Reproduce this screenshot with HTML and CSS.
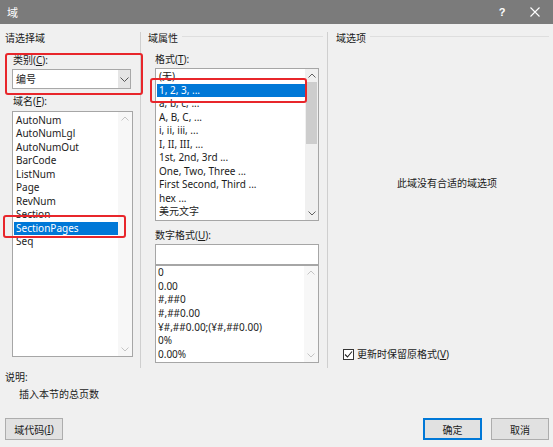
FILE: index.html
```
<!DOCTYPE html>
<html lang="zh-CN">
<head>
<meta charset="utf-8">
<title>域</title>
<link rel="stylesheet" href="styles.css">
</head>
<body>
<div class="dialog">
  <div class="titlebar">
    <span class="title">域</span>
    <span class="tb-btn help">?</span>
    <span class="tb-btn close">
      <svg width="10" height="10" viewBox="0 0 10 10"><path d="M0.5 0.5 L9.5 9.5 M9.5 0.5 L0.5 9.5" stroke="#ffffff" stroke-width="1.1" fill="none"/></svg>
    </span>
  </div>

  <div class="main">
    <section class="col col-left">
      <div class="hdr hdr-left">请选择域</div>
      <div class="lbl lbl-cat">类别(<u>C</u>):</div>
      <div class="combo">
        <span class="combo-text">编号</span>
        <span class="combo-btn">
          <svg width="9" height="5" viewBox="0 0 9 5"><polyline points="0.5,0.5 4.5,4.5 8.5,0.5" fill="none" stroke="#555" stroke-width="1"/></svg>
        </span>
      </div>
      <div class="lbl lbl-name">域名(<u>F</u>):</div>
      <div class="list list-fields">
        <ul class="items">
          <li>AutoNum</li>
          <li>AutoNumLgl</li>
          <li>AutoNumOut</li>
          <li>BarCode</li>
          <li>ListNum</li>
          <li>Page</li>
          <li>RevNum</li>
          <li>Section</li>
          <li class="sel">SectionPages</li>
          <li>Seq</li>
        </ul>
        <div class="sb sb-light">
          <span class="arr"><svg width="8" height="5" viewBox="0 0 8 5"><polyline points="0.5,4.5 4,1 7.5,4.5" fill="none" stroke="#c4c4c4" stroke-width="1"/></svg></span>
          <span class="arr"><svg width="8" height="5" viewBox="0 0 8 5"><polyline points="0.5,0.5 4,4 7.5,0.5" fill="none" stroke="#c4c4c4" stroke-width="1"/></svg></span>
        </div>
      </div>
    </section>

    <section class="col col-mid">
      <div class="hdr hdr-mid">域属性</div>
      <div class="lbl lbl-fmt">格式(<u>T</u>):</div>
      <div class="list list-format">
        <ul class="items">
          <li>(无)</li>
          <li class="sel">1, 2, 3, ...</li>
          <li>a, b, c, ...</li>
          <li>A, B, C, ...</li>
          <li>i, ii, iii, ...</li>
          <li>I, II, III, ...</li>
          <li>1st, 2nd, 3rd ...</li>
          <li>One, Two, Three ...</li>
          <li>First Second, Third ...</li>
          <li>hex ...</li>
          <li>美元文字</li>
        </ul>
        <div class="sb sb-format">
          <span class="arr"><svg width="8" height="5" viewBox="0 0 8 5"><polyline points="0.5,4.5 4,1 7.5,4.5" fill="none" stroke="#606060" stroke-width="1"/></svg></span>
          <span class="thumb"></span>
          <span class="track"></span>
          <span class="arr"><svg width="8" height="5" viewBox="0 0 8 5"><polyline points="0.5,0.5 4,4 7.5,0.5" fill="none" stroke="#606060" stroke-width="1"/></svg></span>
        </div>
      </div>
      <div class="lbl lbl-num">数字格式(<u>U</u>):</div>
      <div class="num-input"></div>
      <div class="list list-num">
        <ul class="items">
          <li>0</li>
          <li>0.00</li>
          <li>#,##0</li>
          <li>#,##0.00</li>
          <li>¥#,##0.00;(¥#,##0.00)</li>
          <li>0%</li>
          <li>0.00%</li>
        </ul>
        <div class="sb sb-light">
          <span class="arr"><svg width="8" height="5" viewBox="0 0 8 5"><polyline points="0.5,4.5 4,1 7.5,4.5" fill="none" stroke="#c4c4c4" stroke-width="1"/></svg></span>
          <span class="arr"><svg width="8" height="5" viewBox="0 0 8 5"><polyline points="0.5,0.5 4,4 7.5,0.5" fill="none" stroke="#c4c4c4" stroke-width="1"/></svg></span>
        </div>
      </div>
    </section>

    <section class="col col-right">
      <div class="hdr hdr-right">域选项</div>
      <div class="no-opts">此域没有合适的域选项</div>
      <div class="check-row">
        <span class="checkbox">
          <svg width="9" height="9" viewBox="0 0 9 9"><polyline points="1,4.5 3.5,7 8,1.5" fill="none" stroke="#222" stroke-width="1.1"/></svg>
        </span>
        <span class="check-label">更新时保留原格式(<u>V</u>)</span>
      </div>
    </section>
  </div>

  <div class="footer">
    <div class="desc-lbl">说明:</div>
    <div class="desc">插入本节的总页数</div>
    <div class="btn-row">
      <span class="btn btn-code">域代码(<u>I</u>)</span>
      <span class="spacer"></span>
      <span class="btn btn-ok">确定</span>
      <span class="btn btn-cancel">取消</span>
    </div>
  </div>

  <div class="mark mark-cat"></div>
  <div class="mark mark-field"></div>
  <div class="mark mark-fmt"></div>
</div>
</body>
</html>
```

FILE: styles.css
```
html, body {
  margin: 0;
  padding: 0;
  background: #f0f0f0;
}

body {
  font-family: "Noto Sans", "Noto Sans CJK SC", sans-serif;
  font-size: 10px;
  color: #1b1b1b;
}

u {
  text-decoration: underline;
  text-underline-offset: 1px;
}

.dialog {
  position: relative;
  width: 553px;
  height: 447px;
  overflow: hidden;
  background: #f0f0f0;
}

/* title bar */
.titlebar {
  height: 24px;
  background: #7b7b7b;
  display: flex;
  align-items: center;
  color: #ffffff;
}

.title {
  flex: 1;
  margin-left: 7px;
  font-size: 11px;
}

.tb-btn {
  display: flex;
  align-items: center;
  justify-content: center;
  height: 24px;
}

.help {
  width: 30px;
  font-size: 11px;
  font-weight: bold;
  font-family: "Liberation Sans", sans-serif;
}

.close {
  width: 36px;
}

/* main area */
.main {
  display: flex;
  margin-top: 8px;
  height: 336px;
}

.col {
  box-sizing: border-box;
  display: flex;
  flex-direction: column;
  align-items: flex-start;
}

.col-left {
  width: 141px;
  border-right: 1px solid #cfcfcf;
}

.col-mid {
  width: 187px;
  border-right: 1px solid #cfcfcf;
}

.col-right {
  flex: 1;
}

.hdr {
  height: 12px;
  line-height: 12px;
  display: flex;
  align-items: center;
  align-self: stretch;
  gap: 4px;
}

.hdr-left {
  padding-left: 5px;
}

.hdr-mid {
  padding-left: 7px;
}

.hdr-right {
  padding-left: 8px;
}

.hdr-mid::after,
.hdr-right::after {
  content: "";
  flex: 1;
  border-top: 1px solid #dedede;
  margin-right: 4px;
  margin-top: -4px;
}

.lbl {
  height: 12px;
  line-height: 12px;
  white-space: nowrap;
}

.lbl-cat {
  margin: 10px 0 0 13px;
}

.lbl-name {
  margin: 6px 0 0 13px;
}

.lbl-fmt {
  margin: 9px 0 0 14px;
}

.lbl-num {
  margin: 8px 0 0 14px;
}

/* combo */
.combo {
  box-sizing: border-box;
  margin: 3px 0 0 12px;
  width: 119px;
  height: 20px;
  border: 1px solid #a8a8a8;
  background: #ffffff;
  display: flex;
  align-items: stretch;
}

.combo-text {
  flex: 1;
  padding-left: 3px;
  line-height: 18px;
}

.combo-btn {
  width: 12px;
  background: #e5e5e5;
  display: flex;
  align-items: center;
  justify-content: center;
}

/* lists */
.list {
  box-sizing: border-box;
  display: flex;
  background: #ffffff;
  border: 1px solid #a6a6a6;
  overflow: hidden;
}

.items {
  list-style: none;
  margin: 0;
  padding: 0;
  flex: 1;
  min-width: 0;
}

.items li {
  height: 13.5px;
  line-height: 13.5px;
  padding-left: 2px;
  white-space: nowrap;
  overflow: hidden;
}

.items li.sel {
  background: #0078d7;
  color: #ffffff;
}

.list-fields {
  margin: 4px 0 0 12px;
  width: 121px;
  height: 246px;
}

.list-fields .items {
  padding: 1.5px 0 0 1px;
}

.list-format {
  margin: 3px 0 0 14px;
  width: 164px;
  height: 153px;
}

.list-format .items {
  padding: 1px 0 0 1px;
}

.num-input {
  box-sizing: border-box;
  margin: 3px 0 0 14px;
  width: 164px;
  height: 21px;
  border: 1px solid #a6a6a6;
  background: #ffffff;
}

.list-num {
  margin: 0 0 0 14px;
  width: 164px;
  height: 98px;
}

.list-num .items li {
  height: 13.67px;
  line-height: 13.67px;
}

/* scrollbars */
.sb {
  width: 14px;
  display: flex;
  flex-direction: column;
  justify-content: space-between;
  align-items: center;
}

.sb-light {
  background: #f7f7f7;
}

.sb-format {
  width: 13px;
  background: #f0f0f0;
  justify-content: flex-start;
}

.arr {
  height: 13px;
  width: 100%;
  display: flex;
  align-items: center;
  justify-content: center;
}

.sb-format .thumb {
  width: 11px;
  height: 62px;
  background: #cdcdcd;
}

.sb-format .track {
  flex: 1;
}

/* right column */
.no-opts {
  margin-top: 133px;
  align-self: stretch;
  padding-left: 13px;
  text-align: center;
  height: 12px;
  line-height: 12px;
}

.check-row {
  margin: 159px 0 0 15px;
  display: flex;
  align-items: center;
  gap: 3px;
  height: 12px;
}

.checkbox {
  box-sizing: border-box;
  width: 11px;
  height: 11px;
  border: 1px solid #333333;
  background: #ffffff;
  display: flex;
  align-items: center;
  justify-content: center;
}

.check-label {
  line-height: 12px;
}

/* footer */
.footer {
  padding-left: 5px;
}

.desc-lbl {
  margin-top: 3px;
  height: 12px;
  line-height: 12px;
}

.desc {
  margin: 5px 0 0 14px;
  height: 12px;
  line-height: 12px;
}

.btn-row {
  display: flex;
  margin-top: 18px;
  padding-right: 4px;
}

.btn {
  box-sizing: border-box;
  height: 22px;
  border: 1px solid #adadad;
  background: #e1e1e1;
  display: flex;
  align-items: center;
  justify-content: center;
}

.btn-code {
  width: 58px;
}

.spacer {
  flex: 1;
}

.btn-ok {
  width: 59px;
  border: 2px solid #0078d7;
}

.btn-cancel {
  width: 58px;
  margin-left: 9px;
}

/* red annotation frames drawn over the dialog */
.mark {
  position: absolute;
  box-sizing: border-box;
  border: 2px solid #e8262b;
  border-radius: 3px;
  pointer-events: none;
}

.mark-cat {
  left: 5px;
  top: 53px;
  width: 138px;
  height: 42px;
}

.mark-field {
  left: 3px;
  top: 215px;
  width: 123px;
  height: 23px;
}

.mark-fmt {
  left: 150px;
  top: 78px;
  width: 157px;
  height: 25px;
}
```
